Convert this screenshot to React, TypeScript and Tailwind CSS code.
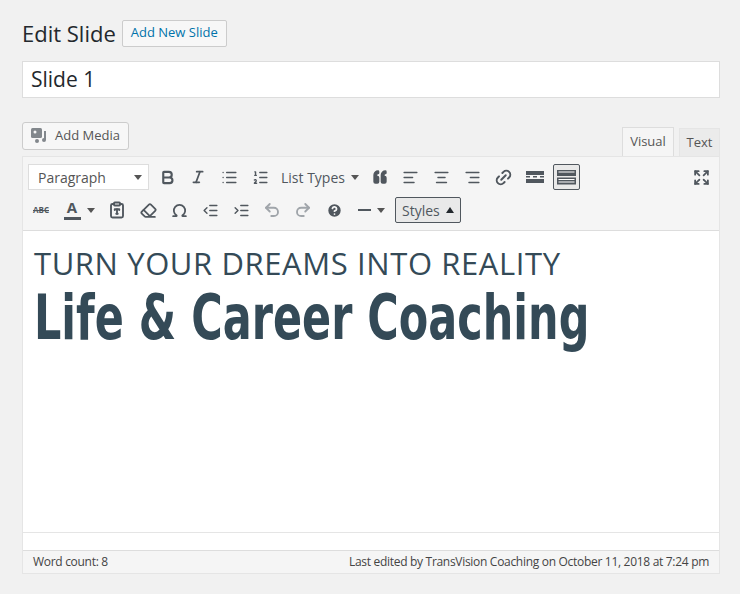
import { Bold, Italic, List, ListOrdered, Quote, AlignLeft, AlignCenter, AlignRight, Link2, Expand, Eraser, Omega, IndentDecrease, IndentIncrease, Undo2, Redo2, CircleHelp, ClipboardType } from "lucide-react";

const F = { fontFamily: '"Open Sans", "Noto Sans", sans-serif' };

function Caret() {
  return <span className="inline-block w-0 h-0 border-l-[4px] border-r-[4px] border-t-[5px] border-l-transparent border-r-transparent border-t-[#555] ml-1.5" />;
}

function Btn({ children, className = "" }: { children: React.ReactNode; className?: string }) {
  return <span className={"flex items-center justify-center h-[26px] min-w-[26px] px-[3px] text-[#50575e] " + className}>{children}</span>;
}

export default function App() {
  return (
    <div className="w-[740px] h-[594px] bg-[#f1f1f1] px-[22px] pt-[19px] text-[#23282d]" style={F}>
      <div className="w-[698px]">
        <div className="flex items-center gap-[6px]">
          <h1 className="text-[22px] leading-[28px]">Edit Slide</h1>
          <span className="text-[13px] text-[#0073aa] border border-[#ccc] bg-[#f7f7f7] rounded-[2px] px-2 h-[27px] flex items-center">Add New Slide</span>
        </div>
        <div className="mt-[14px] h-[37px] bg-white border border-[#ddd] flex items-center px-2 text-[21px]">Slide 1</div>
        <div className="mt-[24px] flex items-end justify-between">
          <span className="mb-[6px] flex items-center gap-1.5 h-[28px] px-2 border border-[#ccc] bg-[#f7f7f7] rounded-[3px] text-[13px] text-[#555]">
            <svg width="18" height="16" viewBox="0 0 18 16" fill="#82878c"><rect x="0" y="0" width="11" height="10" rx="1.5"/><circle cx="4" cy="4" r="1.5" fill="#f7f7f7"/><path d="M13 3h2v9a2 2 0 1 1-2-2z"/><circle cx="6" cy="13" r="2"/></svg>
            Add Media
          </span>
          <div className="flex gap-[5px] text-[13px] text-[#555]">
            <span className="w-[52px] h-[29px] bg-[#f5f5f5] border border-[#ddd] border-b-0 flex items-center justify-center">Visual</span>
            <span className="w-[41px] h-[28px] mt-[1px] bg-[#ebebeb] border border-[#e5e5e5] border-b-0 flex items-center justify-center">Text</span>
          </div>
        </div>
        <div className="border border-[#e5e5e5] bg-white">
          <div className="bg-[#f5f5f5] border-b border-[#ddd] px-[5px] pt-[7px] pb-[7px] flex flex-col gap-[7px]">
            <div className="flex items-center gap-[5px]">
              <span className="w-[121px] h-[26px] bg-white border border-[#ddd] flex items-center justify-between pl-[9px] pr-[6px] text-[14px] text-[#555]">Paragraph<Caret /></span>
              <Btn><Bold size={17} strokeWidth={3} /></Btn>
              <Btn><Italic size={16} strokeWidth={2.5} /></Btn>
              <Btn><List size={17} /></Btn>
              <Btn><ListOrdered size={17} /></Btn>
              <Btn className="text-[14px]">List Types<Caret /></Btn>
              <Btn><Quote size={16} fill="#50575e" className="rotate-180" /></Btn>
              <Btn><AlignLeft size={17} /></Btn>
              <Btn><AlignCenter size={17} /></Btn>
              <Btn><AlignRight size={17} /></Btn>
              <Btn><Link2 size={19} strokeWidth={2.5} className="-rotate-45" /></Btn>
              <Btn><svg width="18" height="12" viewBox="0 0 18 12" fill="#50575e"><rect width="18" height="4"/><rect y="5" width="4" height="1.5"/><rect x="7" y="5" width="4" height="1.5"/><rect x="14" y="5" width="4" height="1.5"/><rect y="8" width="18" height="4"/></svg></Btn>
              <Btn className="border border-[#50575e] bg-[#e9e9e9] rounded-[2px] w-[27px]"><svg width="19" height="15" viewBox="0 0 19 15" fill="#50575e"><rect width="19" height="6"/><rect x="1.5" y="1.5" width="16" height="1" fill="#fff"/><rect y="7.5" width="19" height="7"/><rect x="1.5" y="9" width="16" height="1" fill="#fff"/><rect x="1.5" y="11.5" width="16" height="1" fill="#fff"/></svg></Btn>
              <span className="flex-1" />
              <Btn><Expand size={17} strokeWidth={2.5} /></Btn>
            </div>
            <div className="flex items-center gap-[5px]">
              <Btn><span className="text-[8px] font-bold line-through">ABC</span></Btn>
              <Btn className="w-[40px]"><span className="flex flex-col items-center text-[15px] leading-[15px] font-bold">A<span className="block w-[17px] h-[3px] bg-[#50575e] mt-[2px]" /></span><Caret /></Btn>
              <Btn><ClipboardType size={18} strokeWidth={2.5} /></Btn>
              <Btn><Eraser size={17} strokeWidth={2.5} /></Btn>
              <Btn><Omega size={17} strokeWidth={2.5} /></Btn>
              <Btn><IndentDecrease size={17} /></Btn>
              <Btn><IndentIncrease size={17} /></Btn>
              <Btn className="text-[#a0a5aa]"><Undo2 size={18} strokeWidth={2.5} /></Btn>
              <Btn className="text-[#a0a5aa]"><Redo2 size={18} strokeWidth={2.5} /></Btn>
              <Btn><CircleHelp size={17} fill="#50575e" stroke="#f5f5f5" strokeWidth={2.5} /></Btn>
              <Btn className="w-[38px]"><span className="w-[13px] h-[2px] bg-[#50575e]" /><Caret /></Btn>
              <Btn className="border border-[#50575e] bg-[#e9e9e9] rounded-[2px] text-[14px] px-[6px]">Styles<span className="inline-block w-0 h-0 border-l-[4px] border-r-[4px] border-b-[6px] border-l-transparent border-r-transparent border-b-[#23282d] ml-1.5" /></Btn>
            </div>
          </div>
          <div className="h-[301px] px-[11px] pt-[12px] text-[#344a57] overflow-hidden">
            <div className="text-[31px] leading-[40px] tracking-[0.6px] whitespace-nowrap" style={{ fontFamily: '"Open Sans", sans-serif' }}>TURN YOUR DREAMS INTO REALITY</div>
            <div className="text-[62px] leading-[70px] font-bold whitespace-nowrap" style={{ fontFamily: '"DejaVu Sans Condensed", "DejaVu Sans", sans-serif', transform: "scaleX(0.77)", transformOrigin: "left" }}>Life &amp; Career Coaching</div>
          </div>
          <div className="h-[18px] border-t border-[#e5e5e5]" />
          <div className="h-[23px] bg-[#f5f5f5] border-t border-[#ddd] flex items-center justify-between px-[10px] text-[12px] tracking-[-0.3px] text-[#444]">
            <span>Word count: 8</span>
            <span>Last edited by TransVision Coaching on October 11, 2018 at 7:24 pm</span>
          </div>
        </div>
      </div>
    </div>
  );
}
